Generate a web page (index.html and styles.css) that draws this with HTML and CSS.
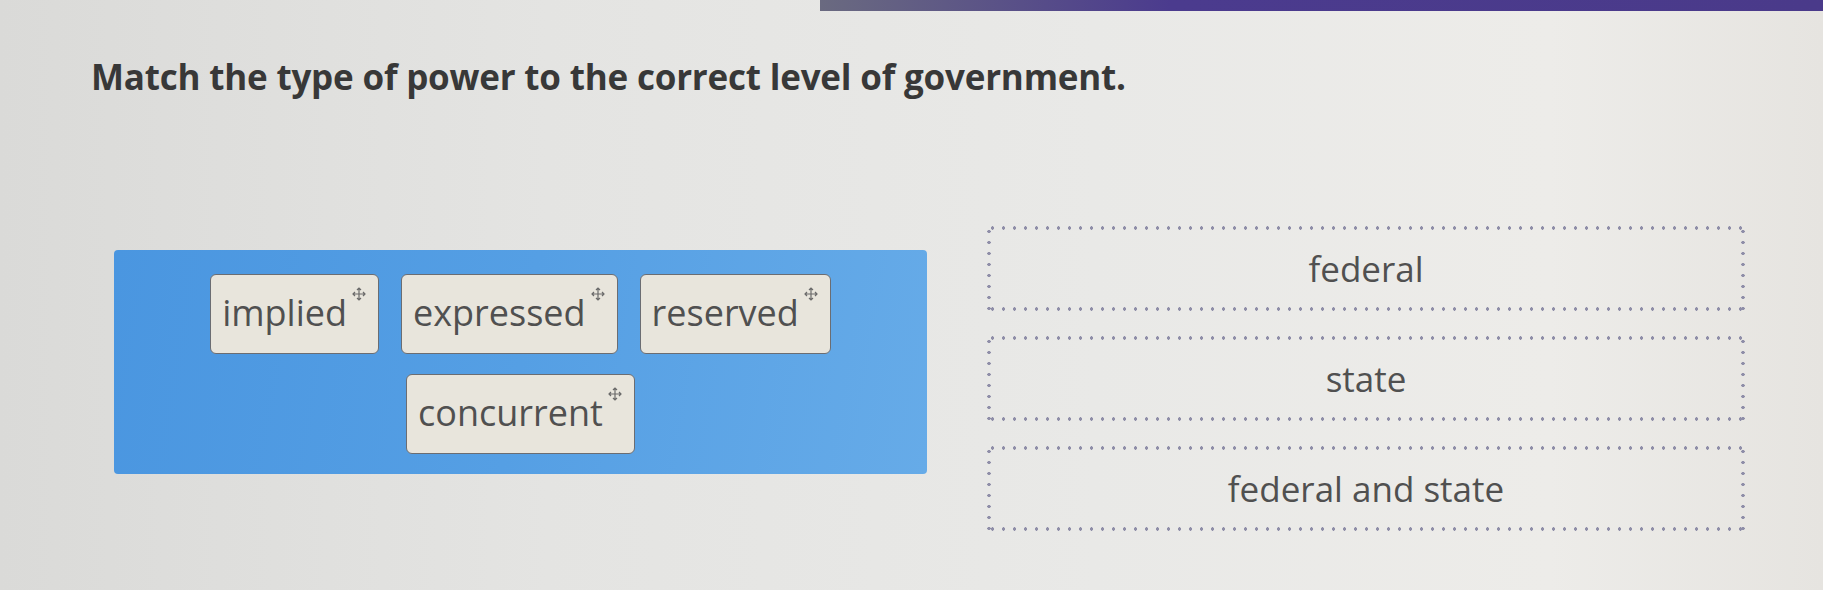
FILE: index.html
```html
<!DOCTYPE html>
<html lang="en">
<head>
<meta charset="utf-8">
<title>Matching</title>
<link rel="stylesheet" href="styles.css">
</head>
<body>
<div class="topbar"></div>
<main class="question">
  <h1 class="prompt">Match the type of power to the correct level of government.</h1>
  <div class="board">
    <div class="pool">
      <div class="tile"><span class="label">implied</span><svg class="grip" viewBox="0 0 14 14"><path d="M7 1v12M1 7h12M5 3l2-2 2 2M5 11l2 2 2-2M3 5L1 7l2 2M11 5l2 2-2 2"/></svg></div>
      <div class="tile"><span class="label">expressed</span><svg class="grip" viewBox="0 0 14 14"><path d="M7 1v12M1 7h12M5 3l2-2 2 2M5 11l2 2 2-2M3 5L1 7l2 2M11 5l2 2-2 2"/></svg></div>
      <div class="tile"><span class="label">reserved</span><svg class="grip" viewBox="0 0 14 14"><path d="M7 1v12M1 7h12M5 3l2-2 2 2M5 11l2 2 2-2M3 5L1 7l2 2M11 5l2 2-2 2"/></svg></div>
      <div class="tile"><span class="label">concurrent</span><svg class="grip" viewBox="0 0 14 14"><path d="M7 1v12M1 7h12M5 3l2-2 2 2M5 11l2 2 2-2M3 5L1 7l2 2M11 5l2 2-2 2"/></svg></div>
    </div>
    <div class="targets">
      <div class="zone">federal</div>
      <div class="zone">state</div>
      <div class="zone">federal and state</div>
    </div>
  </div>
</main>
</body>
</html>
```
FILE: styles.css
```css
html, body {
  margin: 0;
  padding: 0;
}

body {
  width: 1823px;
  height: 590px;
  overflow: hidden;
  font-family: "Open Sans", "Liberation Sans", sans-serif;
  background: linear-gradient(90deg, #dadad8 0%, #e4e4e2 30%, #e9e9e7 60%, #edece9 85%, #e6e4e0 100%);
  color: #4a4a4a;
}

.topbar {
  height: 11px;
  margin-left: 820px;
  background: linear-gradient(90deg, #6a6a80 0%, #4b3b8e 35%, #4a3a8a 100%);
}

.question {
  padding: 0 0 0 91px;
}

.prompt {
  margin: 42px 0 0 0;
  font-size: 35px;
  font-weight: 700;
  color: #383838;
  letter-spacing: -0.2px;
}

.board {
  display: flex;
  align-items: flex-start;
  gap: 60px;
  margin-top: 116px;
  margin-left: 23px;
}

.pool {
  width: 813px;
  height: 224px;
  box-sizing: border-box;
  padding: 24px 30px;
  display: flex;
  flex-wrap: wrap;
  justify-content: center;
  align-content: flex-start;
  gap: 20px 22px;
  border-radius: 4px;
  background: linear-gradient(100deg, #4a96e0 0%, #559fe4 50%, #66abe8 100%);
  margin-top: 34px;
}

.tile {
  display: flex;
  align-items: flex-start;
  gap: 5px;
  height: 80px;
  box-sizing: border-box;
  padding: 0 12px 0 11px;
  background: #e8e5dc;
  border: 1.5px solid #6b6d72;
  border-radius: 6px;
}

.label {
  font-size: 36px;
  line-height: 76px;
  color: #505050;
}

.grip {
  width: 14px;
  height: 14px;
  margin-top: 12px;
  fill: none;
  stroke: #6a6a6a;
  stroke-width: 1.2;
}

.targets {
  display: flex;
  flex-direction: column;
  gap: 25px;
  margin-top: 10px;
}

.zone {
  width: 758px;
  height: 85px;
  box-sizing: border-box;
  display: flex;
  justify-content: center;
  align-items: center;
  font-size: 35px;
  color: #505050;
  background-image:
    radial-gradient(circle, #8f8ea8 1.5px, transparent 1.9px),
    radial-gradient(circle, #8f8ea8 1.5px, transparent 1.9px),
    radial-gradient(circle, #8f8ea8 1.5px, transparent 1.9px),
    radial-gradient(circle, #8f8ea8 1.5px, transparent 1.9px);
  background-size: 11px 4px, 11px 4px, 4px 11px, 4px 11px;
  background-repeat: repeat-x, repeat-x, repeat-y, repeat-y;
  background-position: 0 0, 0 100%, 0 0, 100% 0;
}
```
